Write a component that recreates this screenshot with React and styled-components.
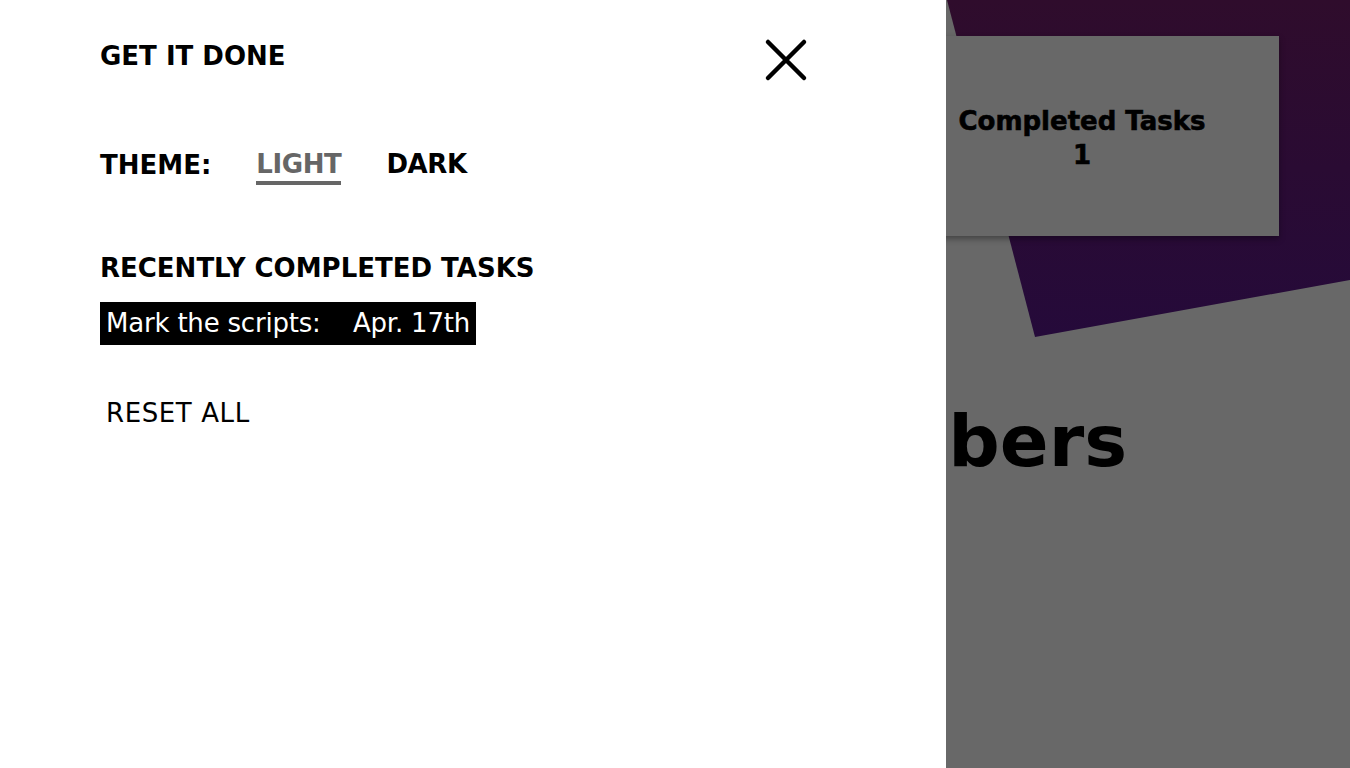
import React from 'react';
import styled, { createGlobalStyle } from 'styled-components';

const GlobalStyle = createGlobalStyle`
  html, body {
    margin: 0;
    padding: 0;
    height: 100%;
    overflow: hidden;
  }
  body {
    font-family: "DejaVu Sans", "Liberation Sans", sans-serif;
    background-color: #686868;
  }
`;

const Page = styled.div`
  position: relative;
  width: 1350px;
  height: 768px;
  background-color: #686868;
  overflow: hidden;
`;

const Backdrop = styled.svg`
  position: absolute;
  top: 0;
  left: 0;
`;

const PageContent = styled.div`
  position: relative;
  display: flex;
  flex-direction: column;
`;

const CardRow = styled.div`
  display: flex;
  justify-content: flex-end;
  padding: 36px 71px 0 0;
`;

const StatCard = styled.div`
  width: 394px;
  height: 200px;
  display: flex;
  flex-direction: column;
  align-items: center;
  justify-content: center;
  background-color: #686868;
  box-shadow: 0 3px 6px rgba(0, 0, 0, 0.35);
  font-family: "DejaVu Sans", sans-serif;
  font-weight: 900;
  font-size: 26px;
  line-height: 34px;
  color: #000;
  padding-top: 4px;
  box-sizing: border-box;
  -webkit-text-stroke: 0.6px #000;
`;

const BigHeading = styled.h1`
  margin: 163px 0 0;
  padding-right: 223px;
  text-align: right;
  font-size: 72px;
  font-weight: 700;
  color: #000;
`;

const Drawer = styled.aside`
  position: absolute;
  top: 0;
  left: 0;
  width: 946px;
  height: 768px;
  background-color: #fff;
  display: flex;
  flex-direction: column;
  padding: 38px 136px 0 100px;
  box-sizing: border-box;
`;

const DrawerHeader = styled.div`
  display: flex;
  justify-content: space-between;
  align-items: flex-start;
`;

const Heading = styled.h2`
  margin: 0;
  font-size: 26px;
  font-weight: 700;
  color: #000;
  line-height: 36px;
`;

const CloseButton = styled.button`
  width: 48px;
  height: 48px;
  margin-top: -2px;
  border: none;
  background: none;
  padding: 0;
  display: flex;
  align-items: center;
  justify-content: center;
  cursor: pointer;
`;

const ThemeRow = styled.div`
  display: flex;
  align-items: flex-start;
  gap: 45px;
  margin-top: 63px;
`;

const ThemeOption = styled.button`
  border: none;
  background: none;
  padding: 0;
  margin: 0;
  font-family: inherit;
  font-size: 26px;
  font-weight: 700;
  line-height: 34px;
  letter-spacing: -0.4px;
  color: ${(p) => (p.$active ? '#666' : '#000')};
  border-bottom: 4px solid ${(p) => (p.$active ? '#666' : 'transparent')};
  cursor: pointer;
`;

const Section = styled.div`
  margin-top: 65px;
  display: flex;
  flex-direction: column;
  align-items: flex-start;
`;

const TaskChip = styled.div`
  margin-top: 16px;
  background-color: #000;
  color: #fff;
  font-size: 26px;
  line-height: 43px;
  padding: 0 6px;
  white-space: pre;
  letter-spacing: -0.2px;
`;

const ResetButton = styled.button`
  margin-top: 50px;
  border: none;
  background: none;
  padding: 0 0 0 6px;
  font-family: inherit;
  font-size: 26px;
  font-weight: 400;
  line-height: 36px;
  letter-spacing: 0.6px;
  color: #000;
  cursor: pointer;
`;

const App = () => {
  return (
    <>
      <GlobalStyle />
      <Page>
        <Backdrop width="1350" height="768">
          <defs>
            <linearGradient id="purple" x1="0" y1="0" x2="0" y2="1">
              <stop offset="0" stopColor="#2f0c2c" />
              <stop offset="1" stopColor="#250a3a" />
            </linearGradient>
          </defs>
          <polygon points="947,0 1350,0 1350,280 1035,337" fill="url(#purple)" />
        </Backdrop>
        <PageContent>
          <CardRow>
            <StatCard>
              <span>Completed Tasks</span>
              <span>1</span>
            </StatCard>
          </CardRow>
          <BigHeading>Numbers</BigHeading>
        </PageContent>
        <Drawer>
          <DrawerHeader>
            <Heading>GET IT DONE</Heading>
            <CloseButton aria-label="Close">
              <svg width="44" height="44" viewBox="0 0 44 44">
                <path d="M4 4 L40 40 M40 4 L4 40" stroke="#000" strokeWidth="4.5" strokeLinecap="round" />
              </svg>
            </CloseButton>
          </DrawerHeader>
          <ThemeRow>
            <Heading>THEME:</Heading>
            <ThemeOption $active>LIGHT</ThemeOption>
            <ThemeOption>DARK</ThemeOption>
          </ThemeRow>
          <Section>
            <Heading>RECENTLY COMPLETED TASKS</Heading>
            <TaskChip>{'Mark the scripts:    Apr. 17th'}</TaskChip>
            <ResetButton>RESET ALL</ResetButton>
          </Section>
        </Drawer>
      </Page>
    </>
  );
};

export default App;
